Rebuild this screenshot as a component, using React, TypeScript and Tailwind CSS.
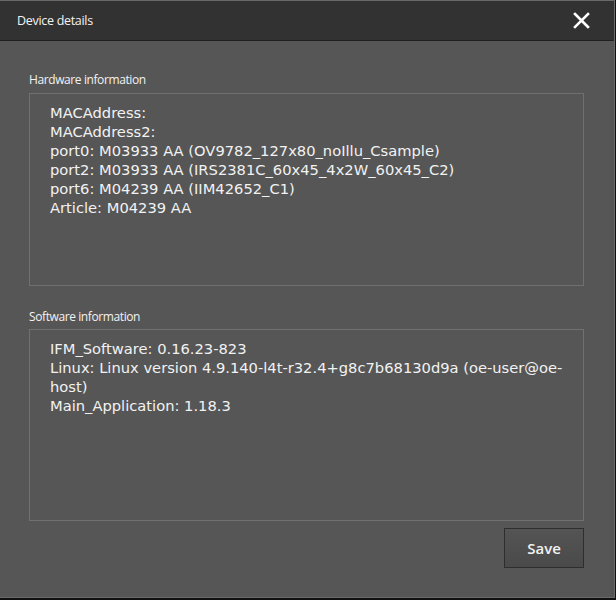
import React from "react";

const font = { fontFamily: '"Open Sans", "DejaVu Sans", sans-serif' };
const mono = { fontFamily: '"DejaVu Sans", "Open Sans", sans-serif' };

export default function App() {
  const hw = [
    "MACAddress:",
    "MACAddress2:",
    "port0: M03933 AA (OV9782_127x80_noIllu_Csample)",
    "port2: M03933 AA (IRS2381C_60x45_4x2W_60x45_C2)",
    "port6: M04239 AA (IIM42652_C1)",
    "Article: M04239 AA",
  ];
  const sw = [
    "IFM_Software: 0.16.23-823",
    "Linux: Linux version 4.9.140-l4t-r32.4+g8c7b68130d9a (oe-user@oe-host)",
    "Main_Application: 1.18.3",
  ];
  return (
    <div className="w-[616px] h-[600px] bg-[#111111] text-[#f2f2f2]" style={font}>
      <div className="w-[615px] h-[598px] flex flex-col border-t border-r border-b border-[#6a6a6a] bg-[#565656]">
        <div className="h-[40px] bg-[#323232] border-b border-[#1f1f1f] flex items-center justify-between pl-[17px] pr-[24px] shrink-0">
          <span className="text-[12.5px] tracking-[-0.3px] pt-[1px]">Device details</span>
          <svg width="17" height="17" viewBox="0 0 17 17" className="block">
            <path d="M2 2 L15 15 M15 2 L2 15" stroke="#ffffff" strokeWidth="2.6" strokeLinecap="square" />
          </svg>
        </div>
        <div className="flex-1 flex flex-col pl-[29px] pr-[30px] pt-[30px]">
          <div className="text-[12px] leading-[18px] h-[18px] tracking-[-0.4px]">Hardware information</div>
          <div className="mt-[4px] h-[193px] border border-[#707070] pl-[20px] pr-[18px] pt-[9px] text-[14.7px] leading-[19px]" style={mono}>
            {hw.map((l) => (
              <div key={l}>{l}</div>
            ))}
          </div>
          <div className="mt-[22px] text-[12px] leading-[18px] h-[18px] tracking-[-0.4px]">Software information</div>
          <div className="mt-[3px] h-[192px] border border-[#707070] pl-[20px] pr-[18px] pt-[9px] text-[14.7px] leading-[19px]" style={mono}>
            {sw.map((l) => (
              <div key={l}>{l}</div>
            ))}
          </div>
          <div className="flex justify-end mt-[7px]">
            <button className="w-[80px] h-[40px] border border-[#2e2e2e] bg-gradient-to-b from-[#545454] to-[#4a4a4a] text-[15px] font-semibold text-[#f2f2f2]">
              Save
            </button>
          </div>
        </div>
      </div>
    </div>
  );
}
